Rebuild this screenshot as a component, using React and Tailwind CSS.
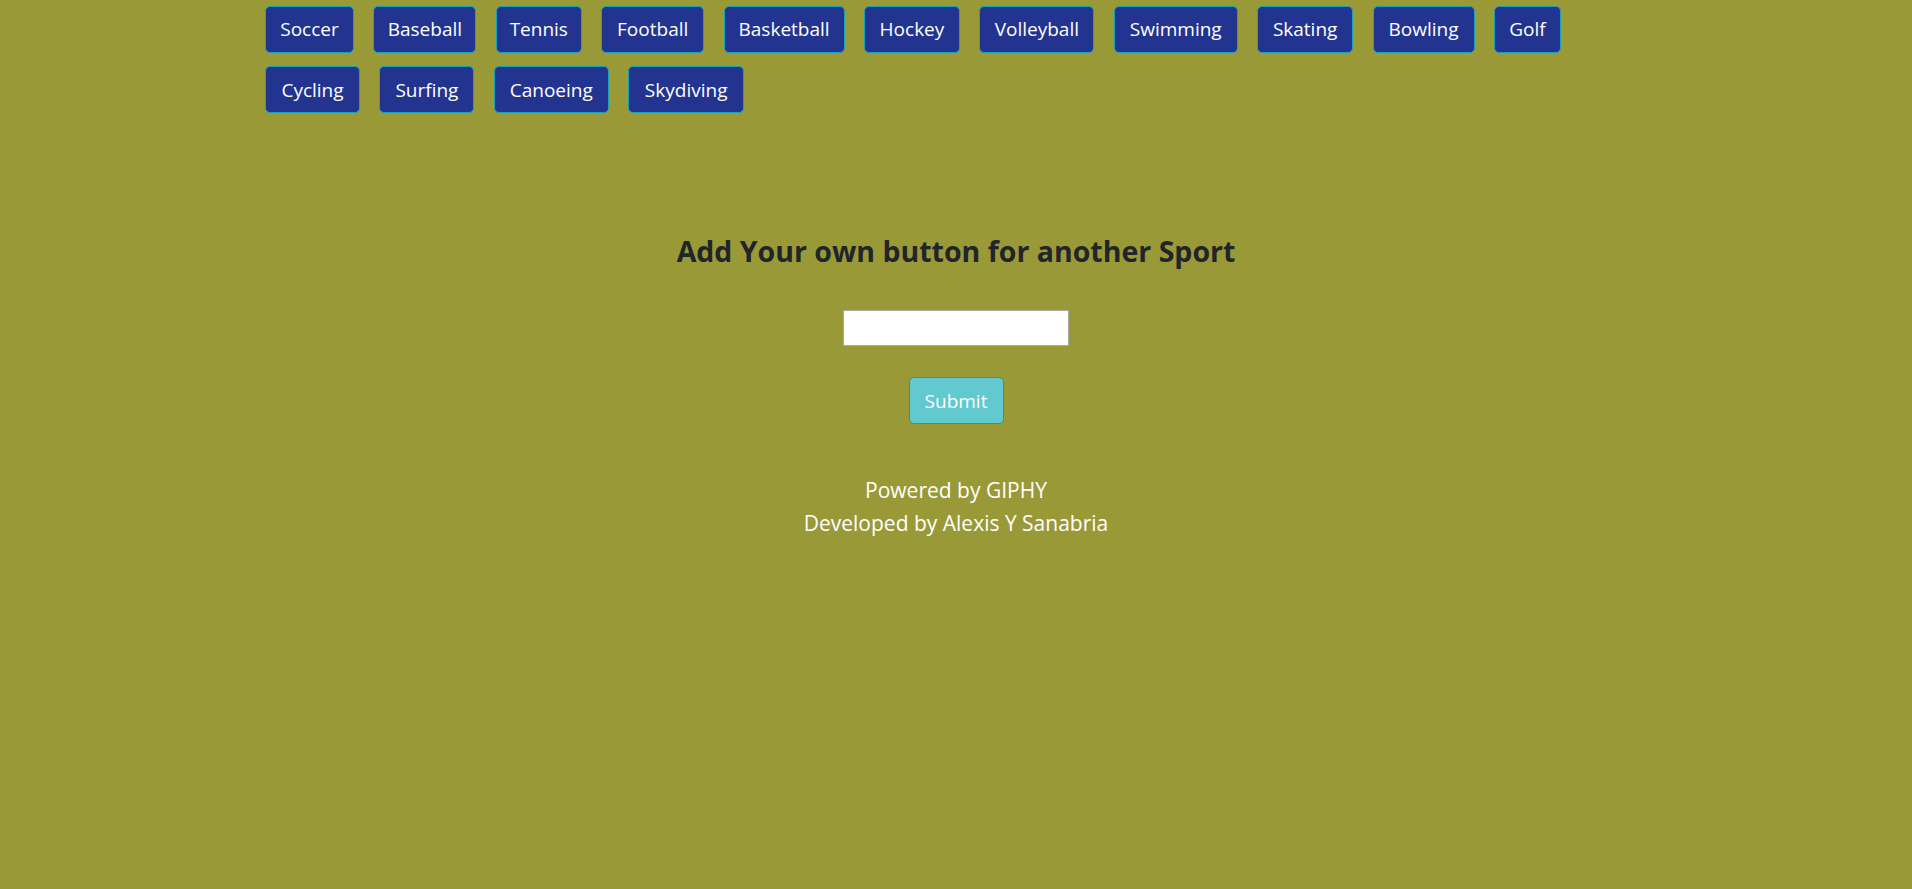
import { useState } from "react";

const sports = [
  { name: "Soccer", w: "w-[89px]" },
  { name: "Baseball", w: "w-[103px]" },
  { name: "Tennis", w: "w-[86px]" },
  { name: "Football", w: "w-[103px]" },
  { name: "Basketball", w: "w-[121px]" },
  { name: "Hockey", w: "w-[96px]" },
  { name: "Volleyball", w: "w-[115px]" },
  { name: "Swimming", w: "w-[124px]" },
  { name: "Skating", w: "w-[96px]" },
  { name: "Bowling", w: "w-[102px]" },
  { name: "Golf", w: "w-[67px]" },
  { name: "Cycling", w: "w-[95px]" },
  { name: "Surfing", w: "w-[95px]" },
  { name: "Canoeing", w: "w-[115px]" },
  { name: "Skydiving", w: "w-[116px]" },
];

export default function App() {
  const [topic, setTopic] = useState("");

  return (
    <div className="min-h-screen bg-[#999937] font-['Open_Sans',sans-serif]">
      {/* sport buttons */}
      <div className="pl-[265px] pt-[6px]">
        <div className="flex w-[1340px] flex-wrap gap-x-[19.4px] gap-y-[13.4px]">
          {sports.map((s) => (
            <button
              key={s.name}
              className={`${s.w} flex h-[47px] items-center justify-center rounded-[5px] border border-[#17a2b8] bg-[#223490] text-[19px] text-white`}
            >
              {s.name}
            </button>
          ))}
        </div>
      </div>

      {/* add form */}
      <div className="flex flex-col items-center">
        <h2 className="mt-[121px] text-[28.5px] leading-[34px] font-bold text-[#212529]">
          Add Your own button for another Sport
        </h2>
        <input
          type="text"
          value={topic}
          onChange={(e) => setTopic(e.target.value)}
          className="mt-[42px] h-[36px] w-[226px] border border-[#a9a9a9] bg-white px-1 text-black outline-none"
        />
        <button className="mt-[31px] h-[47px] w-[95px] rounded-[5px] border border-[#28a745] bg-[#62c9d1] text-[19px] text-white">
          Submit
        </button>
        <div className="mt-[50px] text-center text-[21px] leading-[33px] text-white">
          <p>Powered by GIPHY</p>
          <p>Developed by Alexis Y Sanabria</p>
        </div>
      </div>
    </div>
  );
}
